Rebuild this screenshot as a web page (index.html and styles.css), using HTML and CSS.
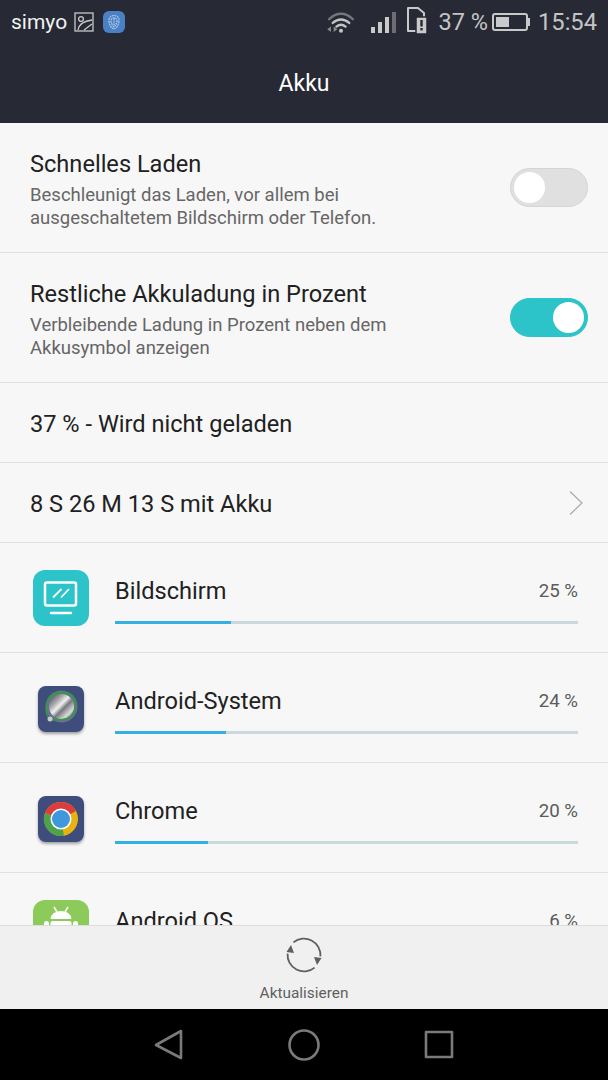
FILE: index.html
```html
<!DOCTYPE html>
<html lang="de">
<head>
    <meta charset="UTF-8">
    <meta name="viewport" content="width=device-width, initial-scale=1.0">
    <title>Akku</title>
    <link rel="stylesheet" href="styles.css">
</head>
<body>
    <div class="phone">
        <header class="top">
            <div class="status">
                <div class="status-left">
                    <span class="carrier">simyo</span>
                    <svg class="pic-icon" width="20" height="20" viewBox="0 0 20 20" fill="none" stroke="#c9c9c9" stroke-width="1.3">
                        <rect x="1" y="1" width="18" height="18"/>
                        <circle cx="7" cy="7" r="2.4"/>
                        <path d="M4 18c1-6 6-9 14-10"/>
                        <path d="M10 18l8-6"/>
                    </svg>
                    <span class="finger">
                        <svg width="12" height="15" viewBox="0 0 12 15" fill="none" stroke="#a9c6e6" stroke-width="1.2" stroke-dasharray="2 .6">
                            <path d="M1 5c0-6 10-6 10 0 0 5-2 8-5 9-3-1-5-4-5-9z"/>
                            <path d="M3 5c1-3 5-3 6 0 0 3-1 5-3 7-2-2-3-4-3-7z"/>
                            <path d="M6 3v7"/>
                        </svg>
                    </span>
                </div>
                <div class="status-right">
                    <svg class="wifi" width="30" height="22" viewBox="0 0 32 24" fill="none" stroke-linecap="round">
                        <path d="M3 9c8-8 18-8 26 0" stroke="#74767c" stroke-width="2.6"/>
                        <path d="M7 13c6-5 12-5 18 0" stroke="#c4c4c4" stroke-width="2.6"/>
                        <path d="M11 17c3-2.500 7-2.500 10 0" stroke="#c4c4c4" stroke-width="2.6"/>
                        <circle cx="16" cy="21.500" r="2.200" fill="#c4c4c4"/>
                        <path d="M1 20l4-3v6zM8 17l4 3-4 3z" fill="#8a8b90"/>
                    </svg>
                    <span class="signal">
                        <i class="bar bar-1"></i>
                        <i class="bar bar-2"></i>
                        <i class="bar bar-3"></i>
                        <i class="bar bar-4"></i>
                    </span>
                    <svg class="sim" width="22" height="28" viewBox="0 0 22 28">
                        <path d="M2 1h10l6 5v18H2z" fill="none" stroke="#c9c9c9" stroke-width="2" stroke-linejoin="round"/>
                        <rect x="10" y="10" width="11" height="17" rx="1" stroke="#272934" stroke-width="1.500" fill="#c9c9c9"/>
                        <rect x="14.300" y="13" width="2.400" height="6.500" fill="#272934"/>
                        <rect x="14.300" y="21" width="2.400" height="2.400" fill="#272934"/>
                    </svg>
                    <span class="percent">37 %</span>
                    <span class="battery"><i class="battery-level"></i></span>
                    <span class="clock">15:54</span>
                </div>
            </div>
            <h1 class="title">Akku</h1>
        </header>

        <main class="list">
            <div class="row row-switch">
                <div class="row-text">
                    <div class="row-title">Schnelles Laden</div>
                    <div class="row-sub">Beschleunigt das Laden, vor allem bei<br>ausgeschaltetem Bildschirm oder Telefon.</div>
                </div>
                <span class="switch"><i class="knob"></i></span>
            </div>
            <div class="row row-switch">
                <div class="row-text">
                    <div class="row-title">Restliche Akkuladung in Prozent</div>
                    <div class="row-sub">Verbleibende Ladung in Prozent neben dem<br>Akkusymbol anzeigen</div>
                </div>
                <span class="switch switch-on"><i class="knob"></i></span>
            </div>
            <div class="row row-plain">
                <div class="row-title">37 % - Wird nicht geladen</div>
            </div>
            <div class="row row-plain row-link">
                <div class="row-title">8 S 26 M 13 S mit Akku</div>
                <svg width="16" height="26" viewBox="0 0 16 26" fill="none" stroke="#aaa" stroke-width="1.2">
                    <path d="M2 1.500L14 13 2 24.500"/>
                </svg>
            </div>

            <div class="row app">
                <div class="app-icon app-icon-teal">
                    <svg width="56" height="56" viewBox="0 0 56 56" fill="none" stroke="#fff">
                        <rect x="12" y="12.500" width="31" height="23" rx="2" stroke-width="2.500"/>
                        <path d="M20 27.500l8.500-8.500M28 27.500l8-8.500" stroke-width="1.800"/>
                        <path d="M18 43h20" stroke-width="2.500" stroke-linecap="round"/>
                    </svg>
                </div>
                <div class="app-main">
                    <div class="app-line"><span class="app-name">Bildschirm</span><span class="app-pct">25 %</span></div>
                    <div class="track"><div class="fill" style="width: 25%"></div></div>
                </div>
            </div>
            <div class="row app">
                <div class="app-icon">
                    <span class="tile">
                        <svg width="46" height="46" viewBox="0 0 46 46">
                            <defs>
                                <linearGradient id="metal" x1="0" y1="0" x2="1" y2="1">
                                    <stop offset="0" stop-color="#3c3d44"/>
                                    <stop offset=".3" stop-color="#a8a9ad"/>
                                    <stop offset=".45" stop-color="#f0f0f0"/>
                                    <stop offset=".58" stop-color="#77797e"/>
                                    <stop offset=".78" stop-color="#d8d8d8"/>
                                    <stop offset="1" stop-color="#55565c"/>
                                </linearGradient>
                            </defs>
                            <circle cx="23.500" cy="20.500" r="16" fill="#69728c"/>
                            <circle cx="23.500" cy="20.500" r="12.500" fill="url(#metal)"/>
                            <path d="M12 34C7 28 7 20 10 14 14 6 28 3 35 11 41 18 38 28 31 32 25 34 18 34 12 34z" fill="none" stroke="#22a62c" stroke-width="1.300"/>
                            <circle cx="12" cy="33" r="2.500" fill="#c9c9c9"/>
                        </svg>
                    </span>
                </div>
                <div class="app-main">
                    <div class="app-line"><span class="app-name">Android-System</span><span class="app-pct">24 %</span></div>
                    <div class="track"><div class="fill" style="width: 24%"></div></div>
                </div>
            </div>
            <div class="row app">
                <div class="app-icon">
                    <span class="tile">
                        <svg width="46" height="46" viewBox="0 0 46 46">
                            <circle cx="23" cy="23" r="17" fill="#e7b40f"/>
                            <path d="M23 23L7 17A17 17 0 0 1 38 15z" fill="#dc3c3c"/>
                            <path d="M23 23L7 17A17 17 0 0 0 26 39.700z" fill="#4fa24c"/>
                            <circle cx="23" cy="23" r="10.500" fill="#fff"/>
                            <circle cx="23" cy="23" r="9" fill="#3f97dc"/>
                        </svg>
                    </span>
                </div>
                <div class="app-main">
                    <div class="app-line"><span class="app-name">Chrome</span><span class="app-pct">20 %</span></div>
                    <div class="track"><div class="fill" style="width: 20%"></div></div>
                </div>
            </div>
            <div class="row app">
                <div class="app-icon app-icon-green">
                    <svg width="56" height="56" viewBox="0 0 56 56" fill="#fff">
                        <path d="M17.500 19a10.500 8 0 0 1 21 0z"/>
                        <path d="M21 7l3 5M35 7l-3 5" stroke="#fff" stroke-width="1.500"/>
                        <rect x="17.500" y="21" width="21" height="22" rx="2"/>
                        <rect x="11" y="21" width="5" height="15" rx="2.500"/>
                        <rect x="40" y="21" width="5" height="15" rx="2.500"/>
                    </svg>
                </div>
                <div class="app-main">
                    <div class="app-line"><span class="app-name">Android OS</span><span class="app-pct">6 %</span></div>
                    <div class="track"><div class="fill" style="width: 6%"></div></div>
                </div>
            </div>
        </main>

        <div class="refresh">
            <svg width="38" height="38" viewBox="0 0 38 38" fill="none" stroke="#5f5f5f" stroke-width="1.800">
                <path d="M8.400 6.400A16.500 16.500 0 0 1 35.400 20.400"/>
                <path d="M29.600 31.600A16.500 16.500 0 0 1 2.600 17.600"/>
                <path d="M29 21l7.500 1-4.500 7z" fill="#5f5f5f" stroke="none"/>
                <path d="M9 17l-7.500-1 4.500-7z" fill="#5f5f5f" stroke="none"/>
            </svg>
            <span class="refresh-label">Aktualisieren</span>
        </div>

        <nav class="nav">
            <svg width="30" height="32" viewBox="0 0 30 32" fill="none" stroke="#7a7a7a" stroke-width="2.600" stroke-linejoin="round">
                <path d="M27 2v27L2 16z"/>
            </svg>
            <svg width="32" height="32" viewBox="0 0 32 32" fill="none" stroke="#7a7a7a" stroke-width="2.600">
                <circle cx="16" cy="16" r="14.500"/>
            </svg>
            <svg width="30" height="30" viewBox="0 0 30 30" fill="none" stroke="#7a7a7a" stroke-width="2.600" stroke-linejoin="round">
                <rect x="2" y="2" width="26" height="25"/>
            </svg>
        </nav>
    </div>
</body>
</html>
```

FILE: styles.css
```css
* {
    box-sizing: border-box;
}
body {
    margin: 0;
    font-family: Roboto, "Liberation Sans", sans-serif;
    background-color: #000;
    color: #212121;
}
.phone {
    width: 608px;
    height: 1080px;
    display: flex;
    flex-direction: column;
    overflow: hidden;
    background-color: #f7f7f7;
}

/* top */
.top {
    height: 123px;
    flex: none;
    background-color: #272934;
}
.status {
    height: 44px;
    padding: 0 11px;
    display: flex;
    align-items: center;
    justify-content: space-between;
}
.status-left, .status-right {
    display: flex;
    align-items: center;
}
.carrier {
    font-size: 21px;
    color: #f2f2f2;
}
.pic-icon {
    margin-left: 7px;
}
.finger {
    width: 22px;
    height: 22px;
    margin-left: 9px;
    border-radius: 6px;
    background-color: #4a80c4;
    display: flex;
    align-items: center;
    justify-content: center;
}
.wifi {
    margin-right: 15px;
}
.signal {
    display: flex;
    align-items: flex-end;
    gap: 3px;
    height: 22px;
    margin-right: 10px;
}
.bar {
    display: block;
    width: 4px;
    background-color: #c9c9c9;
}
.bar-1 { height: 6px; }
.bar-2 { height: 11px; }
.bar-3 { height: 16px; }
.bar-4 { height: 21px; background-color: #6d6e74; }
.sim {
    margin-bottom: 2px;
}
.percent {
    margin-left: 11px;
    font-size: 23.5px;
    color: #c4c4c4;
}
.battery {
    position: relative;
    width: 36px;
    height: 18px;
    margin-left: 4px;
    padding: 2px;
    border: 2px solid #c9c9c9;
    border-radius: 3px;
}
.battery::after {
    content: "";
    position: absolute;
    right: -4px;
    top: 3px;
    width: 2px;
    height: 8px;
    background-color: #c9c9c9;
}
.battery-level {
    display: block;
    width: 13px;
    height: 100%;
    background-color: #c9c9c9;
}
.clock {
    margin-left: 10px;
    font-size: 23.7px;
    color: #c4c4c4;
}
.title {
    margin: 0;
    font-size: 23px;
    font-weight: 400;
    line-height: 80px;
    text-align: center;
    color: #fff;
}

/* list */
.list {
    flex: 1;
    min-height: 0;
    overflow: hidden;
}
.row {
    display: flex;
    align-items: center;
    justify-content: space-between;
    padding: 0 30px;
    border-bottom: 1px solid #e2e2e2;
}
.row-switch {
    height: 130px;
    padding-right: 20px;
}
.row-text {
    padding-top: 5px;
}
.row-plain {
    height: 80px;
}
.row-plain .row-title {
    padding-top: 2px;
}
.row-link {
    padding-right: 24px;
}
.row-title {
    font-size: 23.6px;
    line-height: 28px;
    color: #212121;
}
.row-sub {
    margin-top: 6px;
    font-size: 18.5px;
    line-height: 23px;
    color: #666;
}
.switch {
    width: 78px;
    height: 39px;
    padding: 3px;
    border: 1px solid #d4d4d4;
    border-radius: 20px;
    background-color: #dfe0df;
    display: flex;
}
.knob {
    display: block;
    width: 31px;
    height: 31px;
    border-radius: 50%;
    background-color: #fff;
}
.switch-on {
    border-color: #2cc3c9;
    background-color: #2cc3c9;
    justify-content: flex-end;
}

/* apps */
.app {
    height: 110px;
    align-items: flex-start;
    justify-content: flex-start;
    flex: none;
}
.app-icon {
    width: 56px;
    height: 56px;
    margin: 27px 0 0 3px;
    flex: none;
    display: flex;
    align-items: center;
    justify-content: center;
    border-radius: 12px;
}
.app-icon-teal {
    background-color: #2cc3c9;
}
.app-icon-green {
    background-color: #8ccb5a;
}
.tile {
    width: 46px;
    height: 46px;
    margin-top: 2px;
    border-radius: 8px;
    overflow: hidden;
    background-color: #3f4d7d;
    box-shadow: 0 2px 3px rgba(0, 0, 0, 0.35);
    display: block;
}
.tile svg {
    display: block;
}
.app-main {
    flex: 1;
    margin-left: 26px;
    padding-top: 33px;
}
.app-line {
    display: flex;
    align-items: center;
    justify-content: space-between;
    height: 30px;
}
.app-name {
    font-size: 23.6px;
    color: #212121;
}
.app-pct {
    font-size: 18.7px;
    color: #5c5c5c;
}
.track {
    height: 3px;
    margin-top: 15px;
    background-color: #cbd8dc;
}
.fill {
    height: 100%;
    background-color: #35b0e2;
}

/* bottom */
.refresh {
    height: 84px;
    flex: none;
    display: flex;
    flex-direction: column;
    align-items: center;
    padding-top: 10px;
    border-top: 1px solid #dcdcdc;
    background-color: #f0f0f0;
}
.refresh-label {
    margin-top: 10px;
    font-size: 15.4px;
    color: #5f5f5f;
}
.nav {
    height: 71px;
    flex: none;
    padding: 0 154px;
    background-color: #000;
    display: flex;
    align-items: center;
    justify-content: space-between;
}
```
